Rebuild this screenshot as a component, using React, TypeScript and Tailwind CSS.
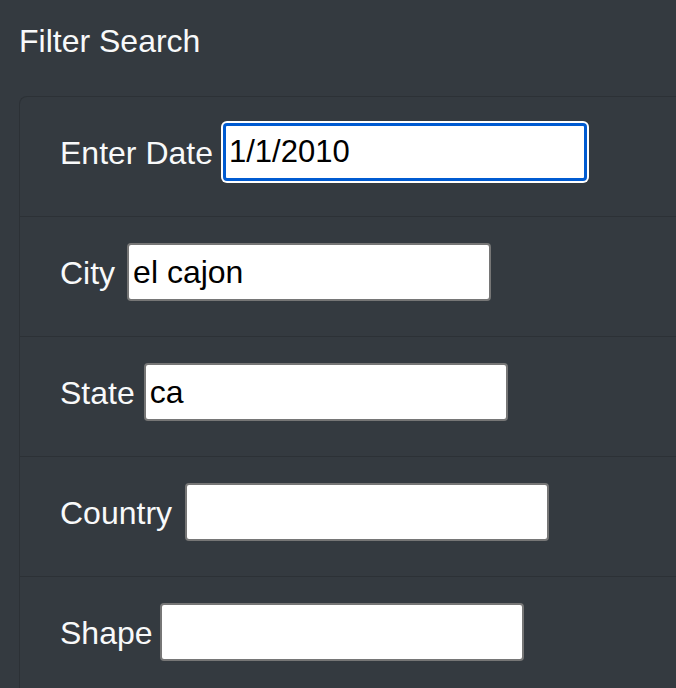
import React from "react";

const rows = [
  { label: "Enter Date", value: "1/1/2010", focused: true, gap: "gap-[10px]" },
  { label: "City", value: "el cajon", gap: "gap-[12px]" },
  { label: "State", value: "ca", gap: "gap-[9px]" },
  { label: "Country", value: "", gap: "gap-[13px]" },
  { label: "Shape", value: "", gap: "gap-[7px]" },
];

export default function App() {
  return (
    <div
      className="w-[676px] h-[688px] overflow-hidden bg-[#343a40] text-[#f8f9fa]"
      style={{ fontFamily: '"Liberation Sans", Arial, sans-serif' }}
    >
      <h5 className="pt-[22px] pl-[19px] text-[32px] leading-[38px] font-normal">Filter Search</h5>
      <div className="mt-[36px] ml-[19px] w-[720px] border-l border-t border-[#2c3136] rounded-tl-[8px]">
        {rows.map((r) => (
          <div key={r.label} className="h-[120px] border-b border-[#2c3136] pl-[40px] pt-[26px]">
            <div className={`flex items-center h-[58px] ${r.gap}`}>
              <label className="text-[32px] leading-[38px] whitespace-nowrap pt-[2px]">{r.label}</label>
              {r.focused ? (
                <div className="rounded-[6px] bg-white p-[2px] -m-[2px]">
                  <input
                    defaultValue={r.value}
                    className="block w-[364px] h-[58px] rounded-[4px] border-[3px] border-[#005bd1] bg-white px-[3px] text-[31px] text-black outline-none"
                    style={{ fontFamily: '"Liberation Sans", Arial, sans-serif' }}
                  />
                </div>
              ) : (
                <input
                  defaultValue={r.value}
                  className="block w-[364px] h-[58px] rounded-[4px] border-2 border-[#767676] bg-white px-[4px] text-[32px] text-black outline-none"
                  style={{ fontFamily: '"Liberation Sans", Arial, sans-serif' }}
                />
              )}
            </div>
          </div>
        ))}
      </div>
    </div>
  );
}
